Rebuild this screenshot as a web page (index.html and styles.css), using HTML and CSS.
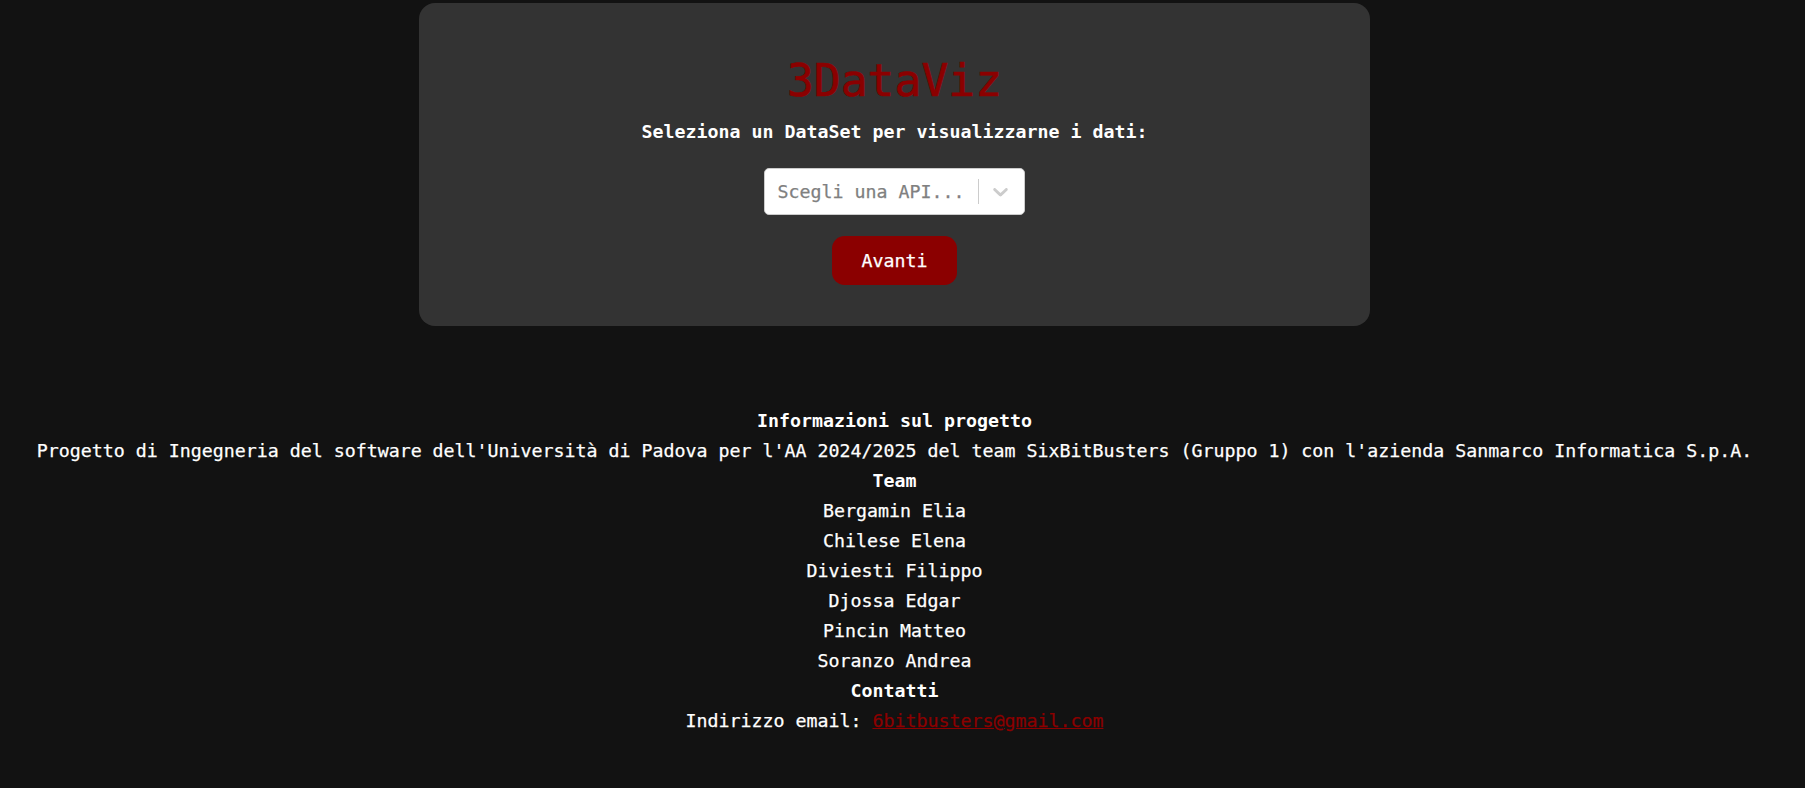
FILE: index.html
```html
<!DOCTYPE html>
<html lang="it">
<head>
<meta charset="utf-8">
<title>3DataViz</title>
<link rel="stylesheet" href="styles.css">
</head>
<body>
<div class="page">
  <main class="card">
    <h1 class="title">3DataViz</h1>
    <p class="subtitle">Seleziona un DataSet per visualizzarne i dati:</p>
    <div class="select">
      <div class="select-value">Scegli una API...</div>
      <div class="select-indicators">
        <span class="select-sep"></span>
        <span class="select-arrow">
          <svg viewBox="0 0 20 20" width="25" height="25" aria-hidden="true"><path d="M4.516 7.548c0.436-0.446 1.043-0.481 1.576 0l3.908 3.747 3.908-3.747c0.533-0.481 1.141-0.446 1.574 0 0.436 0.445 0.408 1.197 0 1.615-0.406 0.418-4.695 4.502-4.695 4.502-0.217 0.223-0.502 0.335-0.787 0.335s-0.57-0.112-0.789-0.335c0 0-4.287-4.084-4.695-4.502s-0.436-1.17 0-1.615z"></path></svg>
        </span>
      </div>
    </div>
    <button class="btn" type="button">Avanti</button>
  </main>
  <footer class="footer">
    <div class="footer-head">Informazioni sul progetto</div>
    <div class="footer-line">Progetto di Ingegneria del software dell'Università di Padova per l'AA 2024/2025 del team SixBitBusters (Gruppo 1) con l'azienda Sanmarco Informatica S.p.A.</div>
    <div class="footer-head">Team</div>
    <div class="footer-line">Bergamin Elia</div>
    <div class="footer-line">Chilese Elena</div>
    <div class="footer-line">Diviesti Filippo</div>
    <div class="footer-line">Djossa Edgar</div>
    <div class="footer-line">Pincin Matteo</div>
    <div class="footer-line">Soranzo Andrea</div>
    <div class="footer-head">Contatti</div>
    <div class="footer-line">Indirizzo email: <a class="mail" href="mailto:6bitbusters@gmail.com">6bitbusters@gmail.com</a></div>
  </footer>
</div>
</body>
</html>
```

FILE: styles.css
```css
html, body {
  margin: 0;
  padding: 0;
  background: #121212;
}

body {
  font-family: "DejaVu Sans Mono", "Liberation Mono", monospace;
  font-size: 18.27px;
  color: #ffffff;
  -webkit-text-stroke: 0.25px currentColor;
}

.page {
  width: calc(100% - 16px);
  padding-top: 3px;
}

.card {
  width: 951px;
  margin: 0 auto;
  box-sizing: border-box;
  background: #333333;
  border-radius: 16px;
  padding: 52px 0 41px;
  display: flex;
  flex-direction: column;
  align-items: center;
}

.title {
  margin: 0;
  font-size: 44.7px;
  line-height: 52px;
  font-weight: normal;
  color: #8b0000;
  -webkit-text-stroke: 0.7px currentColor;
}

.subtitle {
  margin: 14px 0 0;
  line-height: 22px;
  font-weight: bold;
  -webkit-text-stroke: 0;
}

.select {
  margin-top: 25px;
  width: 261px;
  height: 47px;
  box-sizing: border-box;
  background: #ffffff;
  border: 1px solid #cccccc;
  border-radius: 5px;
  display: flex;
  align-items: center;
}

.select-value {
  flex: 1;
  padding-left: 12.5px;
  color: #808080;
  white-space: nowrap;
  line-height: 22px;
}

.select-indicators {
  display: flex;
  align-items: center;
  align-self: stretch;
}

.select-sep {
  width: 1.25px;
  align-self: stretch;
  margin: 10px 0;
  background: #cccccc;
}

.select-arrow {
  display: flex;
  padding: 10px 11px 10px 9px;
}

.select-arrow svg {
  fill: #cccccc;
  display: block;
}

.btn {
  margin-top: 21px;
  height: 49px;
  padding: 0 29.5px;
  border: none;
  border-radius: 12.5px;
  background: #8b0000;
  color: #ffffff;
  font-family: inherit;
  font-size: 18.27px;
  line-height: 22px;
  -webkit-text-stroke: 0.25px currentColor;
  cursor: pointer;
}

.footer {
  margin-top: 79.7px;
  text-align: center;
  line-height: 30px;
}

.footer-head {
  font-weight: bold;
  -webkit-text-stroke: 0;
}

.mail {
  color: #8b0000;
  text-decoration: underline;
}
```
